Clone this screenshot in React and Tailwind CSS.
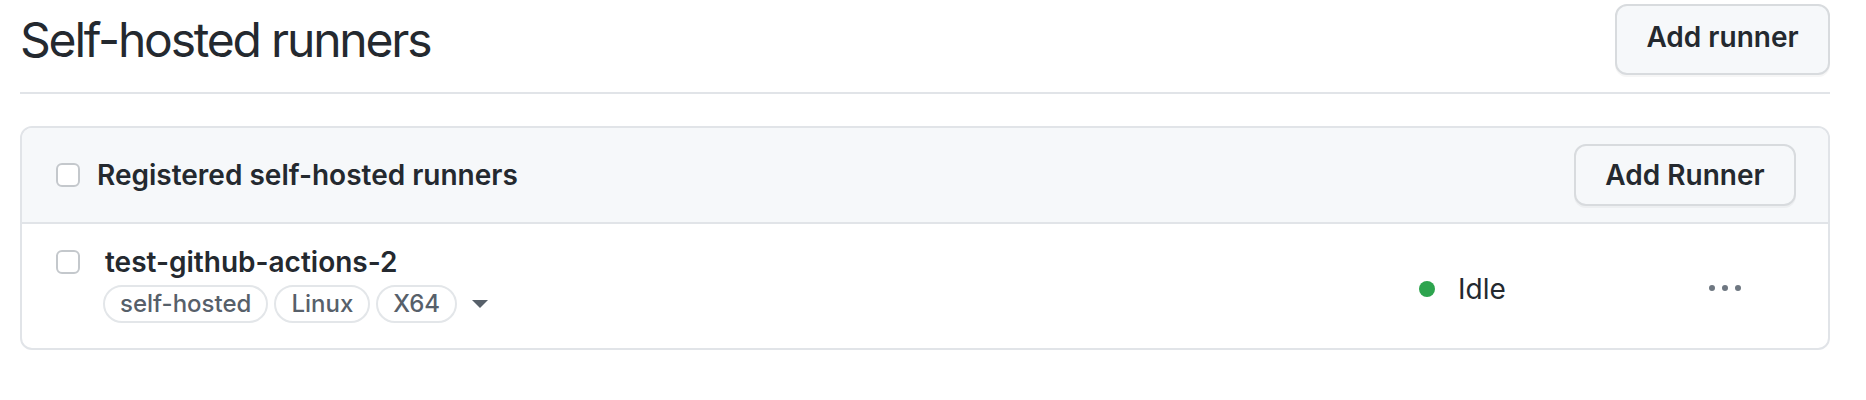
import React from "react";

const KebabIcon = () => (
  <svg width="32" height="32" viewBox="0 0 16 16" fill="#6e7781">
    <path d="M8 9a1.5 1.5 0 1 0 0-3 1.5 1.5 0 0 0 0 3ZM1.5 9a1.5 1.5 0 1 0 0-3 1.5 1.5 0 0 0 0 3Zm13 0a1.5 1.5 0 1 0 0-3 1.5 1.5 0 0 0 0 3Z" />
  </svg>
);

const Checkbox = () => (
  <span className="block w-[24px] h-[24px] rounded-[6px] border-2 border-[#c4c8cc] bg-white shrink-0" />
);

const Label = ({ children }) => (
  <span className="inline-flex items-center h-[38px] px-[15px] rounded-full border-2 border-[#e3e6e9] text-[24px] font-medium text-[#57606a]">
    {children}
  </span>
);

const Button = ({ children, className = "" }) => (
  <button
    className={`rounded-[12px] border-2 border-[#d8dbde] bg-[#f6f8fa] text-[28px] font-semibold text-[#24292f] shadow-[0_2px_0_rgba(27,31,36,0.04)] ${className}`}
  >
    {children}
  </button>
);

const runners = [
  {
    name: "test-github-actions-2",
    labels: ["self-hosted", "Linux", "X64"],
    status: "Idle",
  },
];

export default function App() {
  return (
    <div
      className="bg-white w-[1866px] h-[400px] pl-[20px] pr-[36px] pt-[4px] text-[#24292f]"
      style={{ fontFamily: "Inter, 'Liberation Sans', sans-serif" }}
    >
      {/* Subhead */}
      <div className="flex items-center justify-between pb-[17px] border-b-2 border-[#e1e4e8]">
        <h2 className="text-[48px] font-normal leading-none tracking-[-2.2px]">
          Self-hosted runners
        </h2>
        <Button className="w-[215px] h-[71px] pb-[6px]">Add runner</Button>
      </div>

      {/* Runners box */}
      <div className="mt-[32px] rounded-[12px] border-2 border-[#e1e4e8] overflow-hidden">
        <div className="flex items-center justify-between h-[96px] bg-[#f6f8fa] border-b-2 border-[#e1e4e8] pl-[34px] pr-[32px]">
          <div className="flex items-center gap-[17px]">
            <Checkbox />
            <span className="text-[28px] font-semibold">
              Registered self-hosted runners
            </span>
          </div>
          <Button className="w-[222px] h-[62px]">Add Runner</Button>
        </div>

        {runners.map((runner) => (
          <div key={runner.name} className="flex items-center h-[124px] pl-[34px] pr-[34px]">
            <div className="flex-1 flex items-start gap-[25px] mb-[6px]">
              <div className="pt-[6px]">
                <Checkbox />
              </div>
              <div>
                <div className="text-[28px] font-semibold leading-[36px]">
                  {runner.name}
                </div>
                <div className="flex items-center gap-[6px] mt-[5px] -ml-[2px]">
                  {runner.labels.map((label) => (
                    <Label key={label}>{label}</Label>
                  ))}
                  <svg width="16" height="8" viewBox="0 0 16 8" className="ml-[9px]">
                    <path d="M0 0h16L8 8z" fill="#57606a" />
                  </svg>
                </div>
              </div>
            </div>
            <div className="flex items-center w-[290px] pt-[5px]">
              <span className="w-[16px] h-[16px] rounded-full bg-[#2da44e]" />
              <span className="ml-[23px] text-[28px]">{runner.status}</span>
            </div>
            <div className="flex items-center w-[85px] pt-[5px]">
              <KebabIcon />
            </div>
          </div>
        ))}
      </div>
    </div>
  );
}
